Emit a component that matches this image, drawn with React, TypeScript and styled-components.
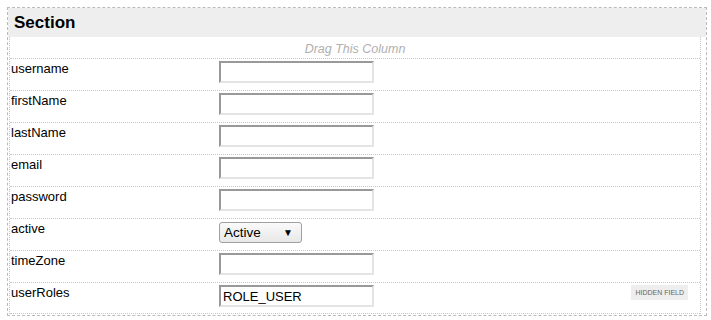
import React from "react";
import styled, { createGlobalStyle } from "styled-components";

const Global = createGlobalStyle`
  html, body { margin: 0; padding: 0; background: #fff; }
  body { font-family: "Liberation Sans", Arial, sans-serif; }
`;

const Page = styled.div`
  padding: 7px 0 0 7px;
`;

const Section = styled.div`
  width: 698px;
  border: 1px dashed #bbb;
  padding-bottom: 1px;
`;

const Header = styled.div`
  height: 29px;
  background: #eee;
  display: flex;
  align-items: center;
  padding-left: 6px;
  font-size: 17px;
  font-weight: bold;
  color: #000;
`;

const Table = styled.div`
  margin: 0 5px 0 1px;
  border-left: 1px dotted #c8c8c8;
  border-right: 1px dotted #c8c8c8;
`;

const DragRow = styled.div`
  height: 21px;
  display: flex;
  align-items: center;
  justify-content: center;
  font-size: 12.5px;
  font-style: italic;
  color: #b0b0b0;
  padding-top: 3px;
  box-sizing: border-box;
`;

const Row = styled.div`
  display: grid;
  grid-template-columns: 209px 1fr auto;
  border-top: 1px dotted #c8c8c8;
  height: 31px;
  &:last-child { border-bottom: 1px dotted #c8c8c8; height: 30px; }
`;

const Label = styled.div`
  font-size: 13px;
  color: #000;
  padding: 2px 0 0 1px;
`;

const Cell = styled.div`
  padding-top: 2px;
`;

const TextInput = styled.input`
  box-sizing: border-box;
  width: 155px;
  height: 22px;
  margin: 0;
  padding: 1px 2px;
  border: 2px solid;
  border-color: #999 #e4e4e4 #e4e4e4 #999;
  background: #fff;
  font-family: "Liberation Sans", Arial, sans-serif;
  font-size: 13px;
  color: #000;
  outline: none;
`;

const Select = styled.div`
  box-sizing: border-box;
  width: 83px;
  height: 21px;
  margin-top: 1px;
  border: 1px solid #a0a0a0;
  border-radius: 3px;
  background: linear-gradient(#fafafa, #e8e8e8);
  display: flex;
  align-items: center;
  justify-content: space-between;
  padding: 0 8px 0 4px;
  font-size: 13.5px;
  color: #000;
`;

const Arrow = styled.span`
  font-size: 10px;
  color: #000;
`;

const Badge = styled.div`
  margin: 2px 12px 0 0;
  height: 15px;
  padding: 0 4px;
  background: #eee;
  display: flex;
  align-items: center;
  font-size: 7px;
  color: #666;
`;

const fields: { name: string; kind?: "select" | "hidden"; value?: string }[] = [
  { name: "username" },
  { name: "firstName" },
  { name: "lastName" },
  { name: "email" },
  { name: "password" },
  { name: "active", kind: "select" },
  { name: "timeZone" },
  { name: "userRoles", kind: "hidden", value: "ROLE_USER" },
];

export default function App() {
  return (
    <Page>
      <Global />
      <Section>
        <Header>Section</Header>
        <Table>
          <DragRow>Drag This Column</DragRow>
          {fields.map((f) => (
            <Row key={f.name}>
              <Label>{f.name}</Label>
              <Cell>
                {f.kind === "select" ? (
                  <Select>
                    <span>Active</span>
                    <Arrow>▼</Arrow>
                  </Select>
                ) : (
                  <TextInput type="text" defaultValue={f.value ?? ""} readOnly />
                )}
              </Cell>
              {f.kind === "hidden" ? <Badge>HIDDEN FIELD</Badge> : <span />}
            </Row>
          ))}
        </Table>
      </Section>
    </Page>
  );
}
